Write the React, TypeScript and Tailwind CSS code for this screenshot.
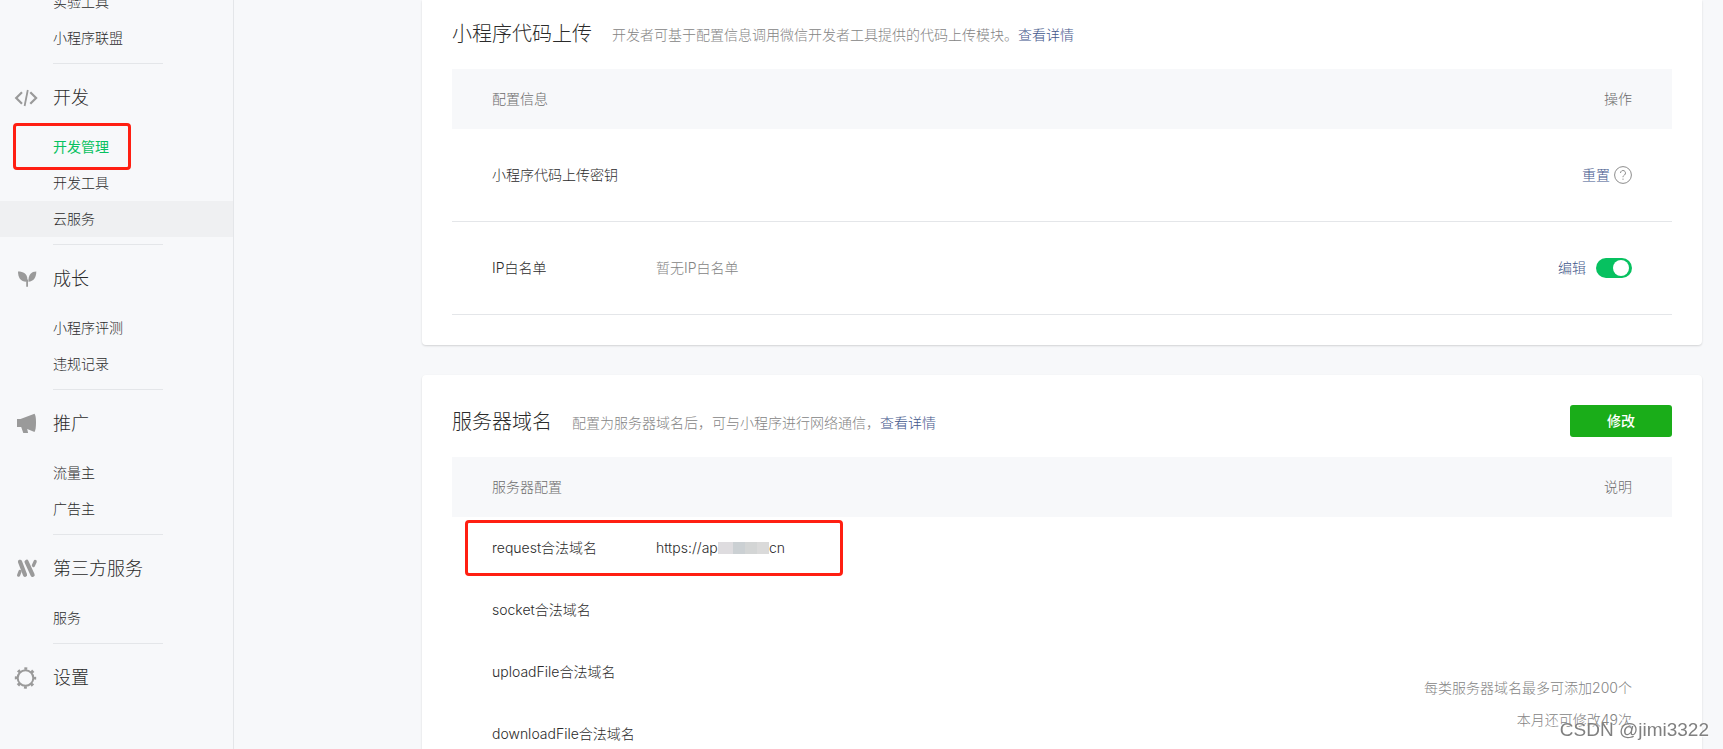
import { ReactNode, useState } from "react";
import { clsx } from "clsx";

type Section = {
  title?: string;
  icon?: ReactNode;
  items: string[];
};

const CodeIcon = () => (
  <svg viewBox="0 0 24 24" className="size-6 fill-none stroke-[#9a9a9a]" strokeWidth="2.2">
    <path d="M8 6.2 2.2 12l5.800 5.800M16.300 6.200l5.800 5.800-5.800 5.800" />
    <path d="M13.800 4 10.600 20" strokeWidth="1.800" />
  </svg>
);

const SproutIcon = () => (
  <svg viewBox="0 0 24 24" className="size-6 fill-[#9a9a9a]">
    <path d="M4 4.500c5.500 0 9 2.700 9.300 6.600.1 1.500-.1 2.700-.6 3.600C7 15 4 10.800 4 4.500Z" />
    <path d="M22.300 4.500c-5 0-8.200 3.200-7.900 10.200C19.600 14.300 22.300 10.500 22.300 4.500Z" />
    <path d="M12.200 12.500H14v7.200h-1.800z" />
  </svg>
);

const HornIcon = () => (
  <svg viewBox="0 0 24 24" className="size-6 fill-[#9a9a9a]">
    <path d="M3 7h3.500L20.500 1.800c1 1.200 1.500 4 1.500 8.700s-.5 7.900-1.500 9.400L13.200 17l.9 4H9.300L7.200 15H3Z" />
  </svg>
);

const ThirdPartyIcon = () => (
  <svg viewBox="0 0 24 24" className="size-6 stroke-[#9a9a9a]" strokeLinecap="round">
    <path d="M6 4.800 11 17.800M12.600 4.800 18.600 17.800" strokeWidth="4.200" />
    <path d="M4.600 18.200 6 14.500M19.400 8.500 21.200 4.500" strokeWidth="3.200" />
  </svg>
);

const GearIcon = () => (
  <svg viewBox="0 0 24 24" className="size-6 fill-none stroke-[#9a9a9a]">
    <circle cx="11.500" cy="12" r="7.800" strokeWidth="2" />
    <circle cx="11.500" cy="12" r="9.500" strokeWidth="2.400" strokeDasharray="3 4.461" strokeDashoffset="1.500" />
  </svg>
);

const SECTIONS: Section[] = [
  { items: ["实验工具", "小程序联盟"] },
  { title: "开发", icon: <CodeIcon />, items: ["开发管理", "开发工具", "云服务"] },
  { title: "成长", icon: <SproutIcon />, items: ["小程序评测", "违规记录"] },
  { title: "推广", icon: <HornIcon />, items: ["流量主", "广告主"] },
  { title: "第三方服务", icon: <ThirdPartyIcon />, items: ["服务"] },
  { title: "设置", icon: <GearIcon />, items: [] },
];

const DOMAINS = ["request合法域名", "socket合法域名", "uploadFile合法域名", "downloadFile合法域名"];

function Sidebar() {
  return (
    <aside className="w-[234px] shrink-0 border-r border-[#e4e6e9]">
      <nav className="-mt-4">
        {SECTIONS.map(({ title, icon, items }, i) => (
          <div key={i}>
            {title && (
              <h2 className="flex h-[65px] items-center gap-[15px] pt-0.5 pl-3.5 text-lg font-light">
                {icon}
                {title}
              </h2>
            )}
            <ul>
              {items.map((item) => (
                <li key={item} className={clsx("relative", item === "云服务" && "bg-[#eff0f2]")}>
                  <a
                    href="#"
                    className={clsx("block pl-[53px] text-sm leading-9", item === "开发管理" && "font-normal text-[#07c160]")}
                  >
                    {item}
                  </a>
                  {item === "开发管理" && (
                    <span className="pointer-events-none absolute -top-1.5 -bottom-[5px] left-[13px] w-[118px] rounded-sm border-3 border-[#ff1f12]" />
                  )}
                </li>
              ))}
            </ul>
            {i < SECTIONS.length - 1 && <hr className="mt-[7px] ml-[53px] w-[110px] border-[#e4e6e9]" />}
          </div>
        ))}
      </nav>
    </aside>
  );
}

function CardTitle({ title, desc, children }: { title: string; desc: string; children?: ReactNode }) {
  return (
    <div className="flex h-8 items-center">
      <h3 className="pt-0.5 text-xl font-light">{title}</h3>
      <p className="ml-5 pt-1 text-sm text-[#848484]">
        {desc}
        <a href="#" className="text-[#3f568a]">
          查看详情
        </a>
      </p>
      {children}
    </div>
  );
}

function TableHead({ left, right }: { left: string; right: string }) {
  return (
    <thead className="bg-[#f7f8fa] text-[#6c6c6c]">
      <tr className="h-[60px]">
        <th colSpan={2} className="pl-10 text-left font-light">
          {left}
        </th>
        <th className="pr-10 text-right font-light">{right}</th>
      </tr>
    </thead>
  );
}

// Greyed out part of the host name
function Mosaic() {
  return (
    <span className="absolute top-1 left-[62px] flex h-3 w-[51px]">
      <span className="w-[15px] bg-[#dedcdf]" />
      <span className="w-3 bg-[#cbd0d3]" />
      <span className="w-3 bg-[#d3d5d5]" />
      <span className="w-3 bg-[#dadada]" />
    </span>
  );
}

export default function App() {
  const [whitelist, setWhitelist] = useState(true);

  return (
    <div className="flex h-screen overflow-hidden bg-[#f7f8fa] font-['Inter','Noto_Sans_CJK_SC',sans-serif] text-sm font-light text-[#2b2b2b]">
      <Sidebar />

      <main className="min-w-0 flex-1 space-y-[30px] pr-[21px] pl-[188px]">
        {/* Code upload */}
        <section className="rounded-b bg-white px-[30px] pt-[17px] pb-[30px] shadow-[0_1px_2px_rgba(0,0,0,0.15)]">
          <CardTitle title="小程序代码上传" desc="开发者可基于配置信息调用微信开发者工具提供的代码上传模块。" />
          <table className="mt-5 w-full border-separate border-spacing-0">
            <TableHead left="配置信息" right="操作" />
            <tbody>
              <tr className="h-[93px] *:border-b *:border-[#e4e6e9]">
                <td colSpan={2} className="pl-10">
                  小程序代码上传密钥
                </td>
                <td className="pr-10">
                  <div className="flex items-center justify-end gap-1">
                    <a href="#" className="text-[#3f568a]">
                      重置
                    </a>
                    <button aria-label="帮助">
                      <svg viewBox="0 0 18 18" className="size-[18px] fill-none stroke-[#8c8c8c]">
                        <circle cx="9" cy="9" r="8.400" />
                        <path d="M6.500 7a2.500 2.500 0 1 1 4 2c-.9.700-1.500 1.100-1.500 2.200M9 12.600v1.200" />
                      </svg>
                    </button>
                  </div>
                </td>
              </tr>
              <tr className="h-[93px] *:border-b *:border-[#e4e6e9]">
                <td className="w-[204px] pl-10">IP白名单</td>
                <td className="text-[#848484]">暂无IP白名单</td>
                <td className="pr-10">
                  <div className="flex items-center justify-end gap-2.5">
                    <a href="#" className="text-[#3f568a]">
                      编辑
                    </a>
                    <label className="relative h-5 w-9">
                      <input
                        type="checkbox"
                        aria-label="IP白名单"
                        checked={whitelist}
                        onChange={(e) => setWhitelist(e.target.checked)}
                        className="peer block h-5 w-9 appearance-none rounded-full bg-gray-300 checked:bg-[#07c160]"
                      />
                      <span className="pointer-events-none absolute top-0.5 left-[3px] size-4 rounded-full bg-white peer-checked:left-[17px]" />
                    </label>
                  </div>
                </td>
              </tr>
            </tbody>
          </table>
        </section>

        {/* Server domains */}
        <section className="rounded bg-white px-[30px] pt-[30px] pb-[30px] shadow-[0_1px_2px_rgba(0,0,0,0.15)]">
          <CardTitle title="服务器域名" desc="配置为服务器域名后，可与小程序进行网络通信，">
            <button className="ml-auto h-8 w-[102px] rounded-[3px] bg-[#1aad19] font-medium text-white">修改</button>
          </CardTitle>
          <table className="mt-5 w-full border-separate border-spacing-0">
            <TableHead left="服务器配置" right="说明" />
            <tbody>
              {DOMAINS.map((name, i) => (
                <tr key={name} className="h-[62px]">
                  <td className="relative w-[204px] pl-10">
                    {name}
                    {i === 0 && (
                      <span className="pointer-events-none absolute top-[3px] left-[13px] h-14 w-[378px] rounded-sm border-3 border-[#ff1f12]" />
                    )}
                  </td>
                  <td>
                    {i === 0 && (
                      <div className="relative flex">
                        <span className="w-[113px]">https://ap</span>
                        <Mosaic />
                        <span>cn</span>
                      </div>
                    )}
                  </td>
                  {i === 0 && (
                    <td rowSpan={DOMAINS.length} className="pt-[155px] pr-10 text-right align-top leading-8 text-[#848484]">
                      <p>每类服务器域名最多可添加200个</p>
                      <p>本月还可修改49次</p>
                    </td>
                  )}
                </tr>
              ))}
            </tbody>
          </table>
        </section>
      </main>

      <div className="fixed right-[14px] bottom-1.5 font-['Liberation_Sans',sans-serif] text-[19px] font-normal text-[#808080] [text-shadow:1px_1px_1px_rgba(255,255,255,0.8)]">
        CSDN @jimi3322
      </div>
    </div>
  );
}
